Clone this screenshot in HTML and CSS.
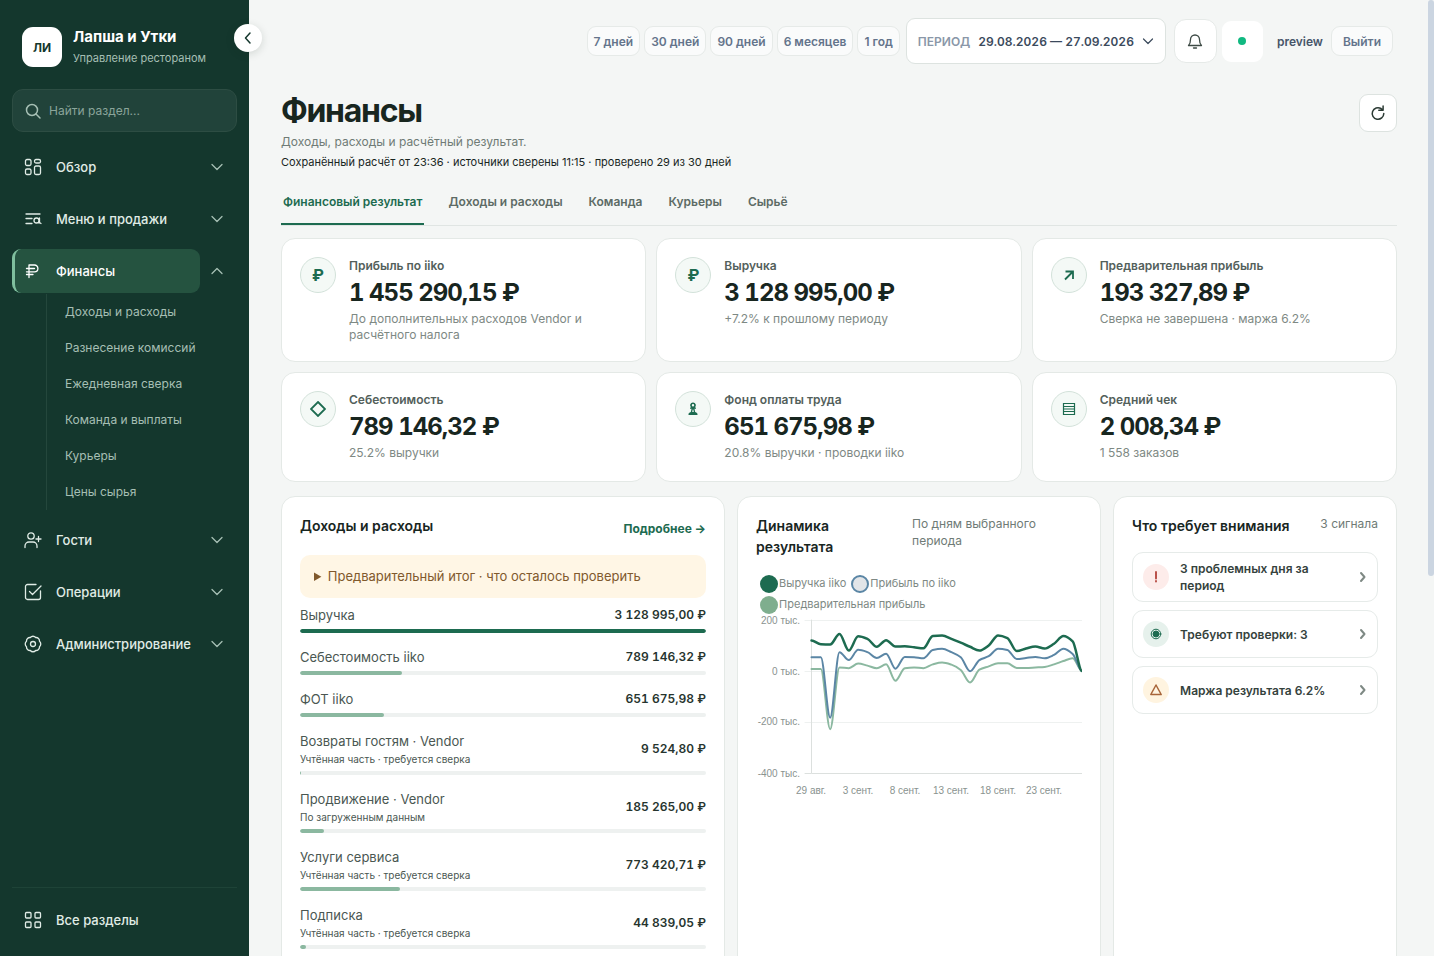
FILE: index.html
```html
<!DOCTYPE html>
<html lang="ru">
<head>
    <meta charset="UTF-8">
    <meta name="viewport" content="width=device-width, initial-scale=1.0">
    <title>Финансы — Лапша и Утки</title>
    <link rel="stylesheet" href="styles.css">
</head>
<body>
    <div class="app">
        <aside class="sidebar">
            <div class="brand">
                <div class="brand-logo">ЛИ</div>
                <div class="brand-text">
                    <strong>Лапша и Утки</strong>
                    <span>Управление рестораном</span>
                </div>
            </div>
            <button class="collapse" type="button" aria-label="Свернуть меню">
                <svg width="16" height="16" viewBox="0 0 16 16"><path d="M10 3 5.500 8 10 13"/></svg>
            </button>
            <label class="search">
                <svg width="16" height="16" viewBox="0 0 16 16"><circle cx="7" cy="7" r="5.500"/><path d="m11 11 4 4"/></svg>
                <input type="search" placeholder="Найти раздел..." aria-label="Найти раздел">
            </label>
            <nav class="nav">
                <div class="nav-row">
                    <a class="nav-link" href="#overview">
                        <svg width="18" height="18" viewBox="0 0 18 18"><rect x="1.500" y="1.500" width="5.500" height="6" rx="1.500"/><rect x="10.500" y="1.500" width="6" height="3.500" rx="1.500"/><rect x="1.500" y="11" width="5.500" height="5.500" rx="1.500"/><rect x="10.500" y="8" width="6" height="8.500" rx="1.500"/></svg>
                        Обзор
                    </a>
                    <button class="nav-toggle" type="button" aria-label="Раскрыть Обзор"><svg width="12" height="12" viewBox="0 0 12 12"><path d="m1 3.500 5 5 5-5"/></svg></button>
                </div>
                <div class="nav-row">
                    <a class="nav-link" href="#menu">
                        <svg width="18" height="18" viewBox="0 0 18 18"><path d="M2 4h14M2 8.500h6M2 13.500h6"/><circle cx="12.500" cy="10.500" r="2.500"/><path d="M15.500 8v4.500l1.500 1M14.500 12.500l.5.500"/></svg>
                        Меню и продажи
                    </a>
                    <button class="nav-toggle" type="button" aria-label="Раскрыть Меню и продажи"><svg width="12" height="12" viewBox="0 0 12 12"><path d="m1 3.500 5 5 5-5"/></svg></button>
                </div>
                <div class="nav-row">
                    <a class="nav-link active" href="#finance">
                        <svg width="18" height="18" viewBox="0 0 18 18"><path d="M5 15.500V3h5.500a3.200 3.200 0 0 1 0 6.800H2.500M2.500 12.500H9M2.500 6.500h8"/></svg>
                        Финансы
                    </a>
                    <button class="nav-toggle" type="button" aria-label="Свернуть Финансы"><svg width="12" height="12" viewBox="0 0 12 12"><path d="m1 8.500 5-5 5 5"/></svg></button>
                </div>
                <div class="subnav">
                    <a href="#income">Доходы и расходы</a>
                    <a href="#fees">Разнесение комиссий</a>
                    <a href="#daily">Ежедневная сверка</a>
                    <a href="#team">Команда и выплаты</a>
                    <a href="#couriers">Курьеры</a>
                    <a href="#prices">Цены сырья</a>
                </div>
                <div class="nav-row">
                    <a class="nav-link" href="#guests">
                        <svg width="18" height="18" viewBox="0 0 18 18"><circle cx="7" cy="5" r="3.200"/><path d="M1 16.500v-1.500a4 4 0 0 1 4-4h4a4 4 0 0 1 4 4v1.500M14.500 5.500v5M12 8h5"/></svg>
                        Гости
                    </a>
                    <button class="nav-toggle" type="button" aria-label="Раскрыть Гости"><svg width="12" height="12" viewBox="0 0 12 12"><path d="m1 3.500 5 5 5-5"/></svg></button>
                </div>
                <div class="nav-row">
                    <a class="nav-link" href="#operations">
                        <svg width="18" height="18" viewBox="0 0 18 18"><path d="M16.500 8v6.500a2 2 0 0 1-2 2h-11a2 2 0 0 1-2-2v-11a2 2 0 0 1 2-2H12M5.500 8.500l3 3L17 3"/></svg>
                        Операции
                    </a>
                    <button class="nav-toggle" type="button" aria-label="Раскрыть Операции"><svg width="12" height="12" viewBox="0 0 12 12"><path d="m1 3.500 5 5 5-5"/></svg></button>
                </div>
                <div class="nav-row">
                    <a class="nav-link" href="#admin">
                        <svg width="18" height="18" viewBox="0 0 18 18"><circle cx="9" cy="9" r="2.500"/><path d="M15.500 6.300a3.500 3.500 0 0 1 0 5.400 3.500 3.500 0 0 1-3.800 3.800 3.500 3.500 0 0 1-5.400 0 3.500 3.500 0 0 1-3.800-3.800 3.500 3.500 0 0 1 0-5.400 3.500 3.500 0 0 1 3.800-3.800 3.500 3.500 0 0 1 5.400 0 3.500 3.500 0 0 1 3.800 3.800z"/></svg>
                        Администрирование
                    </a>
                    <button class="nav-toggle" type="button" aria-label="Раскрыть Администрирование"><svg width="12" height="12" viewBox="0 0 12 12"><path d="m1 3.500 5 5 5-5"/></svg></button>
                </div>
            </nav>
            <div class="sidebar-footer">
                <a class="nav-link" href="#all">
                    <svg width="18" height="18" viewBox="0 0 18 18"><rect x="1.500" y="1.500" width="5.500" height="5.500" rx="1"/><rect x="11" y="1.500" width="5.500" height="5.500" rx="1"/><rect x="1.500" y="11" width="5.500" height="5.500" rx="1"/><rect x="11" y="11" width="5.500" height="5.500" rx="1"/></svg>
                    Все разделы
                </a>
            </div>
        </aside>

        <main class="main">
            <header class="topbar">
                <div class="presets">
                    <button class="chip" type="button">7 дней</button>
                    <button class="chip" type="button">30 дней</button>
                    <button class="chip" type="button">90 дней</button>
                    <button class="chip" type="button">6 месяцев</button>
                    <button class="chip" type="button">1 год</button>
                </div>
                <button class="period" type="button">
                    <span>ПЕРИОД</span>
                    <b>29.08.2026 — 27.09.2026</b>
                    <svg width="12" height="12" viewBox="0 0 12 12"><path d="m1.500 4 4.500 4.500L10.500 4"/></svg>
                </button>
                <button class="bell" type="button" aria-label="Уведомления">
                    <svg width="18" height="18" viewBox="0 0 18 18"><path d="M2.500 13.500h13c-1.500-1.300-2-2.500-2-6a4.500 4.500 0 0 0-9 0c0 3.500-.5 4.700-2 6zM7.500 16h3"/></svg>
                </button>
                <div class="status"><i></i></div>
                <span class="user">preview</span>
                <button class="chip logout" type="button">Выйти</button>
            </header>

            <div class="content">
                <div class="page-head">
                    <div>
                        <h1>Финансы</h1>
                        <p class="lead">Доходы, расходы и расчётный результат.</p>
                        <p class="meta">Сохранённый расчёт от 23:36 · источники сверены 11:15 · проверено 29 из 30 дней</p>
                    </div>
                    <button class="refresh" type="button" aria-label="Обновить">
                        <svg width="16" height="16" viewBox="0 0 16 16"><path d="M13.800 8.500A5.800 5.800 0 1 1 11 3.500l1.800 1.300M8.800 5.300h4.300V1"/></svg>
                    </button>
                </div>

                <nav class="tabs">
                    <a class="current" href="#result">Финансовый результат</a>
                    <a href="#income">Доходы и расходы</a>
                    <a href="#team">Команда</a>
                    <a href="#couriers">Курьеры</a>
                    <a href="#raw">Сырьё</a>
                </nav>

                <section class="kpis">
                    <article class="kpi">
                        <div class="kpi-icon">₽</div>
                        <div>
                            <h2>Прибыль по iiko</h2>
                            <strong>1 455 290,15 ₽</strong>
                            <p>До дополнительных расходов Vendor и расчётного налога</p>
                        </div>
                    </article>
                    <article class="kpi">
                        <div class="kpi-icon">₽</div>
                        <div>
                            <h2>Выручка</h2>
                            <strong>3 128 995,00 ₽</strong>
                            <p>+7.2% к прошлому периоду</p>
                        </div>
                    </article>
                    <article class="kpi">
                        <div class="kpi-icon"><svg width="16" height="16" viewBox="0 0 16 16"><path d="m4 12.500 8-8M4.500 4.500H12V12"/></svg></div>
                        <div>
                            <h2>Предварительная прибыль</h2>
                            <strong>193 327,89 ₽</strong>
                            <p>Сверка не завершена · маржа 6.2%</p>
                        </div>
                    </article>
                    <article class="kpi">
                        <div class="kpi-icon"><svg width="16" height="16" viewBox="0 0 16 16"><path d="m8 1 7 7-7 7-7-7z"/></svg></div>
                        <div>
                            <h2>Себестоимость</h2>
                            <strong>789 146,32 ₽</strong>
                            <p>25.2% выручки</p>
                        </div>
                    </article>
                    <article class="kpi">
                        <div class="kpi-icon"><svg class="solid" width="16" height="16" viewBox="0 0 16 16"><path fill-rule="evenodd" d="M8 1.500a2.800 2.800 0 0 1 1.800 5H11v1.300H9.500l.7 3.200c1.600.4 2.300 1.200 2.300 2.500v.5h-9v-.5c0-1.300.7-2.100 2.300-2.500l.7-3.200H5V6.500h1.200a2.800 2.800 0 0 1 1.800-5zM8 3a1.200 1.200 0 1 0 0 2.400A1.200 1.200 0 0 0 8 3zm-.3 5.500L7.200 11h1.600l-.5-2.500z"/></svg></div>
                        <div>
                            <h2>Фонд оплаты труда</h2>
                            <strong>651 675,98 ₽</strong>
                            <p>20.8% выручки · проводки iiko</p>
                        </div>
                    </article>
                    <article class="kpi">
                        <div class="kpi-icon"><svg class="thin" width="16" height="16" viewBox="0 0 16 16"><path d="M2.500 2.500h11v11h-11zM2.500 5.500h11M2.500 8h11M2.500 10.500h11"/></svg></div>
                        <div>
                            <h2>Средний чек</h2>
                            <strong>2 008,34 ₽</strong>
                            <p>1 558 заказов</p>
                        </div>
                    </article>
                </section>

                <section class="panels">
                    <article class="panel">
                        <div class="panel-head">
                            <h2>Доходы и расходы</h2>
                            <a class="more" href="#income">Подробнее →</a>
                        </div>
                        <details class="notice">
                            <summary>Предварительный итог · что осталось проверить</summary>
                        </details>
                        <ul class="bars">
                            <li>
                                <div class="bar-text"><span>Выручка</span><b>3 128 995,00 ₽</b></div>
                                <div class="bar full"><i style="width: 100%"></i></div>
                            </li>
                            <li>
                                <div class="bar-text"><span>Себестоимость iiko</span><b>789 146,32 ₽</b></div>
                                <div class="bar"><i style="width: 25.2%"></i></div>
                            </li>
                            <li>
                                <div class="bar-text"><span>ФОТ iiko</span><b>651 675,98 ₽</b></div>
                                <div class="bar"><i style="width: 20.8%"></i></div>
                            </li>
                            <li>
                                <div class="bar-text"><span>Возвраты гостям · Vendor<small>Учтённая часть · требуется сверка</small></span><b>9 524,80 ₽</b></div>
                                <div class="bar"><i style="width: 0.3%"></i></div>
                            </li>
                            <li>
                                <div class="bar-text"><span>Продвижение · Vendor<small>По загруженным данным</small></span><b>185 265,00 ₽</b></div>
                                <div class="bar"><i style="width: 5.9%"></i></div>
                            </li>
                            <li>
                                <div class="bar-text"><span>Услуги сервиса<small>Учтённая часть · требуется сверка</small></span><b>773 420,71 ₽</b></div>
                                <div class="bar"><i style="width: 24.7%"></i></div>
                            </li>
                            <li>
                                <div class="bar-text"><span>Подписка<small>Учтённая часть · требуется сверка</small></span><b>44 839,05 ₽</b></div>
                                <div class="bar"><i style="width: 1.4%"></i></div>
                            </li>
                        </ul>
                    </article>

                    <article class="panel">
                        <div class="panel-head trend-head">
                            <h2>Динамика результата</h2>
                            <span>По дням выбранного периода</span>
                        </div>
                        <ul class="legend">
                            <li class="revenue"><i></i>Выручка iiko</li>
                            <li class="profit"><i></i>Прибыль по iiko</li>
                            <li class="prelim"><i></i>Предварительная прибыль</li>
                        </ul>
                        <svg class="chart" viewBox="0 0 326 184">
                            <path class="grid" d="M49 5.500h277M49 56.500h277M49 107.500h277"/>
                            <path class="axis" d="M55.500 5v153.500H326M49 158.500h6"/>
                            <g class="y-labels">
                                <text x="44" y="9">200 тыс.</text>
                                <text x="44" y="60">0 тыс.</text>
                                <text x="44" y="110">-200 тыс.</text>
                                <text x="44" y="162">-400 тыс.</text>
                            </g>
                            <g class="x-labels">
                                <text x="55" y="179">29 авг.</text>
                                <text x="102" y="179">3 сент.</text>
                                <text x="149" y="179">8 сент.</text>
                                <text x="195" y="179">13 сент.</text>
                                <text x="242" y="179">18 сент.</text>
                                <text x="288" y="179">23 сент.</text>
                            </g>
                            <path class="line prelim" id="line-prelim"/>
                            <path class="line profit" id="line-profit"/>
                            <path class="line revenue" id="line-revenue"/>
                        </svg>
                    </article>

                    <article class="panel">
                        <div class="panel-head">
                            <h2>Что требует внимания</h2>
                            <span>3 сигнала</span>
                        </div>
                        <div class="alerts">
                            <a href="#days">
                                <span class="alert-icon danger"><svg width="16" height="16" viewBox="0 0 16 16"><path d="M8 3v6.500M8 12v.5"/></svg></span>
                                <b>3 проблемных дня за период</b>
                                <svg class="arrow" width="8" height="12" viewBox="0 0 8 12"><path d="m2 2 3.500 4L2 10"/></svg>
                            </a>
                            <a href="#checks">
                                <span class="alert-icon ok"><svg width="16" height="16" viewBox="0 0 16 16"><circle cx="8" cy="8" r="4.800"/><circle class="dot" cx="8" cy="8" r="3"/></svg></span>
                                <b>Требуют проверки: 3</b>
                                <svg class="arrow" width="8" height="12" viewBox="0 0 8 12"><path d="m2 2 3.500 4L2 10"/></svg>
                            </a>
                            <a href="#margin">
                                <span class="alert-icon warn"><svg width="16" height="16" viewBox="0 0 16 16"><path d="m8 3 5.200 9.500H2.800z"/></svg></span>
                                <b>Маржа результата 6.2%</b>
                                <svg class="arrow" width="8" height="12" viewBox="0 0 8 12"><path d="m2 2 3.500 4L2 10"/></svg>
                            </a>
                        </div>
                    </article>
                </section>
            </div>
        </main>
        <div class="scroll-thumb"></div>
    </div>
    <script src="chart.js"></script>
</body>
</html>
```
FILE: styles.css
```css
* {
    box-sizing: border-box;
}
body {
    margin: 0;
    background: #f4f6f5;
    color: #18261f;
    font-family: Inter, "Noto Sans", sans-serif;
    font-size: 13px;
}
h1, h2, p, ul {
    margin: 0;
    padding: 0;
}
ul {
    list-style: none;
}
a {
    color: inherit;
    text-decoration: none;
}
button, input {
    font: inherit;
    color: inherit;
}
button {
    cursor: pointer;
}
svg {
    flex: none;
    fill: none;
    stroke: currentColor;
    stroke-width: 1.500;
    stroke-linecap: round;
    stroke-linejoin: round;
}
.app {
    display: flex;
    height: 100vh;
    overflow: hidden;
}

/* sidebar */
.sidebar {
    position: relative;
    z-index: 2;
    flex: none;
    width: 249px;
    padding: 26px 12px 14px;
    display: flex;
    flex-direction: column;
    background: #14372d;
    color: #e0ece6;
}
.brand {
    display: flex;
    align-items: center;
    gap: 11px;
    padding-left: 10px;
}
.brand-logo {
    width: 40px;
    height: 40px;
    display: grid;
    place-items: center;
    border-radius: 11px;
    background: #fff;
    color: #14372d;
    font-size: 12px;
    font-weight: 700;
}
.brand-text strong {
    display: block;
    color: #fff;
    font-size: 15px;
    line-height: 22px;
}
.brand-text span {
    display: block;
    color: #a6bfb4;
    font-size: 11px;
    line-height: 20px;
}
.collapse {
    position: absolute;
    top: 24px;
    right: -13px;
    width: 28px;
    height: 28px;
    padding: 0;
    display: grid;
    place-items: center;
    border: 0;
    border-radius: 50%;
    background: #fff;
    color: #14372d;
    box-shadow: 0 2px 8px rgba(20, 40, 30, 0.15);
}
.search {
    display: flex;
    align-items: center;
    gap: 8px;
    height: 43px;
    margin-top: 21px;
    padding: 0 12px;
    border: 1px solid #2d4d43;
    border-radius: 11px;
    background: #21433a;
    color: #a6bfb4;
    font-size: 12px;
}
.search input {
    width: 100%;
    padding: 0;
    border: 0;
    outline: 0;
    background: none;
}
.search input::placeholder {
    color: #8ba59a;
}
.nav {
    display: flex;
    flex-direction: column;
    gap: 8px;
    margin-top: 13px;
}
.nav-row {
    display: flex;
}
.nav-link {
    flex: 1;
    display: flex;
    align-items: center;
    gap: 14px;
    height: 44px;
    padding-left: 12px;
    border-radius: 9px;
    font-weight: 500;
    white-space: nowrap;
}
.nav-link svg {
    stroke-width: 1.300;
}
.nav-link.active {
    padding-left: 9px;
    border-left: 3px solid #7fbf9e;
    background: #255340;
    color: #fff;
}
.nav-toggle {
    display: grid;
    place-items: center;
    width: 37px;
    padding: 0 3px 0 0;
    border: 0;
    background: none;
    color: #a6bfb4;
}
.nav-toggle svg {
    stroke-width: 1.300;
}
.subnav {
    display: flex;
    flex-direction: column;
    margin: -7px 0 0 34px;
    padding-left: 18px;
    border-left: 1px solid #24473c;
    color: #a6bfb4;
    font-size: 12px;
}
.subnav a {
    line-height: 36px;
}
.sidebar-footer {
    display: flex;
    margin-top: auto;
    padding-top: 10px;
    border-top: 1px solid #1e4337;
}

/* top bar */
.main {
    flex: 1;
    min-width: 0;
    padding-right: 6px;
}
.topbar {
    display: flex;
    align-items: center;
    justify-content: flex-end;
    height: 82px;
    padding-right: 35px;
}
.presets {
    display: flex;
    gap: 4px;
}
.chip {
    height: 30px;
    padding: 0 6px;
    border: 1px solid #e6eae8;
    border-radius: 9px;
    background: #fafbfb;
    color: #64748b;
    font-size: 12px;
    font-weight: 600;
}
.period {
    display: flex;
    align-items: center;
    gap: 8px;
    height: 46px;
    margin-left: 6px;
    padding: 0 11px;
    border: 1px solid #dde3e0;
    border-radius: 9px;
    background: #fff;
    font-size: 12px;
    font-variant-numeric: tabular-nums;
}
.period span {
    color: #8a97a8;
    font-weight: 600;
}
.period b {
    color: #3b4a5c;
    font-weight: 600;
}
.period svg {
    color: #3b4a5c;
    stroke-width: 1.200;
}
.bell, .status {
    display: grid;
    place-items: center;
    width: 43px;
    height: 44px;
    padding: 0;
    border: 1px solid #e6eae8;
    border-radius: 12px;
    background: #fff;
    color: #3d4a45;
}
.bell {
    margin-left: 8px;
}
.bell svg {
    stroke-width: 1.300;
}
.status {
    width: 41px;
    height: 41px;
    margin-left: 5px;
    border: 0;
    border-radius: 9px;
}
.status i {
    width: 8px;
    height: 8px;
    border-radius: 50%;
    background: #10b981;
}
.user {
    margin: 0 8px 0 14px;
    color: #475569;
    font-size: 12px;
    font-weight: 600;
}
.logout {
    padding: 0 11px;
}

/* page header */
.content {
    padding: 12px 31px 0 32px;
}
.page-head {
    display: flex;
    justify-content: space-between;
    align-items: flex-start;
}
h1 {
    font-size: 32px;
    line-height: 34px;
    letter-spacing: -0.04em;
}
.lead {
    margin-top: 4px;
    color: #6f7b76;
    font-size: 12px;
    line-height: 20px;
}
.meta {
    font-size: 11px;
    line-height: 20px;
}
.refresh {
    display: grid;
    place-items: center;
    width: 38px;
    height: 38px;
    padding: 0;
    border: 1px solid #dde3e0;
    border-radius: 9px;
    background: #fff;
    color: #2b3a34;
}
.tabs {
    display: flex;
    gap: 22px;
    margin-top: 8px;
    border-bottom: 1px solid #e0e5e3;
    color: #5d6b65;
    font-size: 12px;
    font-weight: 600;
}
.tabs a {
    padding: 1px 2px 0;
    line-height: 42px;
    border-bottom: 2px solid transparent;
}
.tabs .current {
    border-color: #1d6b50;
    color: #1d6b50;
}

/* kpi cards */
.kpis {
    display: grid;
    grid-template-columns: repeat(3, 1fr);
    gap: 10px;
    margin-top: 12px;
}
.kpi, .panel {
    border: 1px solid #e4e9e6;
    border-radius: 14px;
    background: #fff;
}
.kpi {
    display: flex;
    gap: 13px;
    min-height: 110px;
    padding: 18px;
}
.kpi-icon {
    flex: none;
    display: grid;
    place-items: center;
    width: 36px;
    height: 36px;
    border: 1px solid #d3e2da;
    border-radius: 50%;
    background: #f4f9f6;
    color: #1d6b50;
    font-size: 16px;
    font-weight: 700;
}
.kpi-icon svg {
    stroke-width: 1.800;
    stroke-linecap: butt;
    stroke-linejoin: miter;
}
.kpi-icon .solid {
    fill: currentColor;
    stroke: none;
}
.kpi-icon .thin {
    stroke-width: 1.200;
}
.kpi h2 {
    color: #53605b;
    font-size: 12px;
    font-weight: 600;
    line-height: 18px;
}
.kpi strong {
    display: block;
    margin: 2px 0;
    font-size: 24px;
    line-height: 32px;
    letter-spacing: -0.04em;
    font-variant-numeric: tabular-nums;
}
.kpi p {
    color: #7e8984;
    font-size: 12px;
    line-height: 16px;
}

/* panels */
.panels {
    display: grid;
    grid-template-columns: 1.22fr 1fr 0.78fr;
    gap: 12px;
    margin-top: 14px;
}
.panel {
    min-width: 0;
    min-height: 600px;
    padding: 18px;
}
.panel-head {
    display: flex;
    justify-content: space-between;
    gap: 12px;
    margin-bottom: 16px;
}
.panel-head h2 {
    font-size: 14px;
    font-weight: 600;
    line-height: 21px;
}
.panel-head span {
    color: #6f7b76;
    font-size: 12px;
    line-height: 17px;
}
.panel-head .more {
    padding-top: 6px;
    color: #1d6b50;
    font-size: 12px;
    font-weight: 700;
    line-height: 15px;
}
.notice {
    margin-top: 19px;
    padding: 12px 14px;
    border-radius: 10px;
    background: #fff6e5;
    color: #80592d;
    line-height: 19px;
}
.bars {
    display: flex;
    flex-direction: column;
    gap: 14px;
    margin-top: 7px;
    color: #4a5752;
}
.bar-text {
    display: flex;
    justify-content: space-between;
    align-items: center;
    line-height: 20px;
}
.bar-text small {
    display: block;
    font-size: 10px;
    line-height: 16px;
}
.bar-text b {
    color: #26342e;
    font-size: 12px;
    font-weight: 600;
    font-variant-numeric: tabular-nums;
}
.bar {
    height: 4px;
    margin-top: 4px;
    border-radius: 2px;
    overflow: hidden;
    background: #eef1f0;
}
.bar i {
    display: block;
    height: 100%;
    border-radius: 2px;
    background: #8bb8a0;
}
.bar.full i {
    background: #1d6b50;
}

/* trend chart */
.trend-head {
    display: grid;
    grid-template-columns: 144px 1fr;
}
.trend-head h2 {
    max-width: 100px;
}
.trend-head span {
    max-width: 140px;
}
.legend {
    display: flex;
    flex-wrap: wrap;
    column-gap: 5px;
    padding-left: 4px;
    color: #7e8984;
    font-size: 11px;
    line-height: 21px;
}
.legend li {
    display: flex;
    align-items: center;
    gap: 1px;
}
.legend i {
    width: 18px;
    height: 18px;
    border-radius: 50%;
}
.legend .revenue i {
    background: #1d6b50;
}
.legend .profit i {
    border: 2px solid #5b86a5;
    background: #e2e5e8;
}
.legend .prelim i {
    background: #7fae8e;
}
.chart {
    display: block;
    width: 100%;
}
.chart .grid {
    stroke: #eef1f0;
    stroke-width: 1;
}
.chart .axis {
    stroke: #dce0de;
    stroke-width: 1;
}
.chart text {
    fill: #8a938f;
    stroke: none;
    font-family: "Liberation Sans", Arial, sans-serif;
    font-size: 10px;
}
.y-labels {
    text-anchor: end;
}
.x-labels {
    text-anchor: middle;
}
.line {
    stroke-width: 2;
}
.line.revenue {
    stroke: #1d6b50;
    stroke-width: 2.500;
}
.line.profit {
    stroke: #5b86a5;
}
.line.prelim {
    stroke: #8bb8a0;
}

/* alerts */
.alerts {
    display: flex;
    flex-direction: column;
    gap: 8px;
}
.alerts a {
    display: flex;
    align-items: center;
    gap: 11px;
    min-height: 48px;
    padding: 7px 10px;
    border: 1px solid #e6ebe9;
    border-radius: 11px;
}
.alerts b {
    flex: 1;
    color: #35423d;
    font-size: 12px;
    font-weight: 600;
    line-height: 17px;
}
.alert-icon {
    display: grid;
    place-items: center;
    width: 26px;
    height: 26px;
    border-radius: 50%;
}
.danger {
    background: #fdecea;
    color: #b3423a;
}
.danger svg {
    stroke-width: 1.800;
}
.ok {
    background: #e6f1ec;
    color: #1d6b50;
}
.ok svg {
    stroke-width: 1;
}
.ok .dot {
    fill: currentColor;
}
.warn {
    background: #fff4e0;
    color: #a8653a;
}
.arrow {
    color: #7e8984;
    stroke-width: 2;
}

.scroll-thumb {
    position: fixed;
    top: 0;
    right: 0;
    width: 6px;
    height: 576px;
    border-radius: 3px;
    background: #cbd5e1;
}
```
FILE: chart.js
```js
// daily values, thousands of roubles
const series = {
    revenue: [120, 105, 104, 145, 80, 136, 126, 95, 121, 96, 97, 93, 89, 137, 139, 126, 111, 95, 80, 100, 139, 129, 78, 88, 96, 88, 107, 137, 116, 0],
    profit: [54, 54, -183, 74, 43, 83, 74, 51, 68, 9, 55, 54, 50, 82, 87, 74, 54, -1, 43, 58, 87, 82, 47, 51, 55, 50, 63, 87, 67, 0],
    prelim: [8, 8, -228, 14, 11, 29, 21, 11, 26, -38, 11, 14, 11, 26, 33, 25, 4, -45, 5, 18, 30, 30, 12, 12, 14, 16, 26, 39, 50, 0]
};

const left = 55.5;
const right = 326;
const zeroY = 56;
const scale = 51 / 200;

function smoothPath(values) {
    const step = (right - left) / (values.length - 1);
    const pts = values.map((v, i) => [left + i * step, zeroY - v * scale]);
    // flat tangent at peaks so the curve does not overshoot
    const slope = pts.map((p, i) => {
        if (i === 0 || i === pts.length - 1) return 0;
        const a = p[1] - pts[i - 1][1];
        const b = pts[i + 1][1] - p[1];
        return a * b <= 0 ? 0 : 2 * a * b / (a + b);
    });
    let d = `M${pts[0][0]} ${pts[0][1]}`;
    for (let i = 1; i < pts.length; i++) {
        const [x0, y0] = pts[i - 1];
        const [x1, y1] = pts[i];
        d += `C${x0 + step / 3} ${y0 + slope[i - 1] / 3} ${x1 - step / 3} ${y1 - slope[i] / 3} ${x1} ${y1}`;
    }
    return d;
}

for (const name in series) {
    document.getElementById("line-" + name).setAttribute("d", smoothPath(series[name]));
}
```
